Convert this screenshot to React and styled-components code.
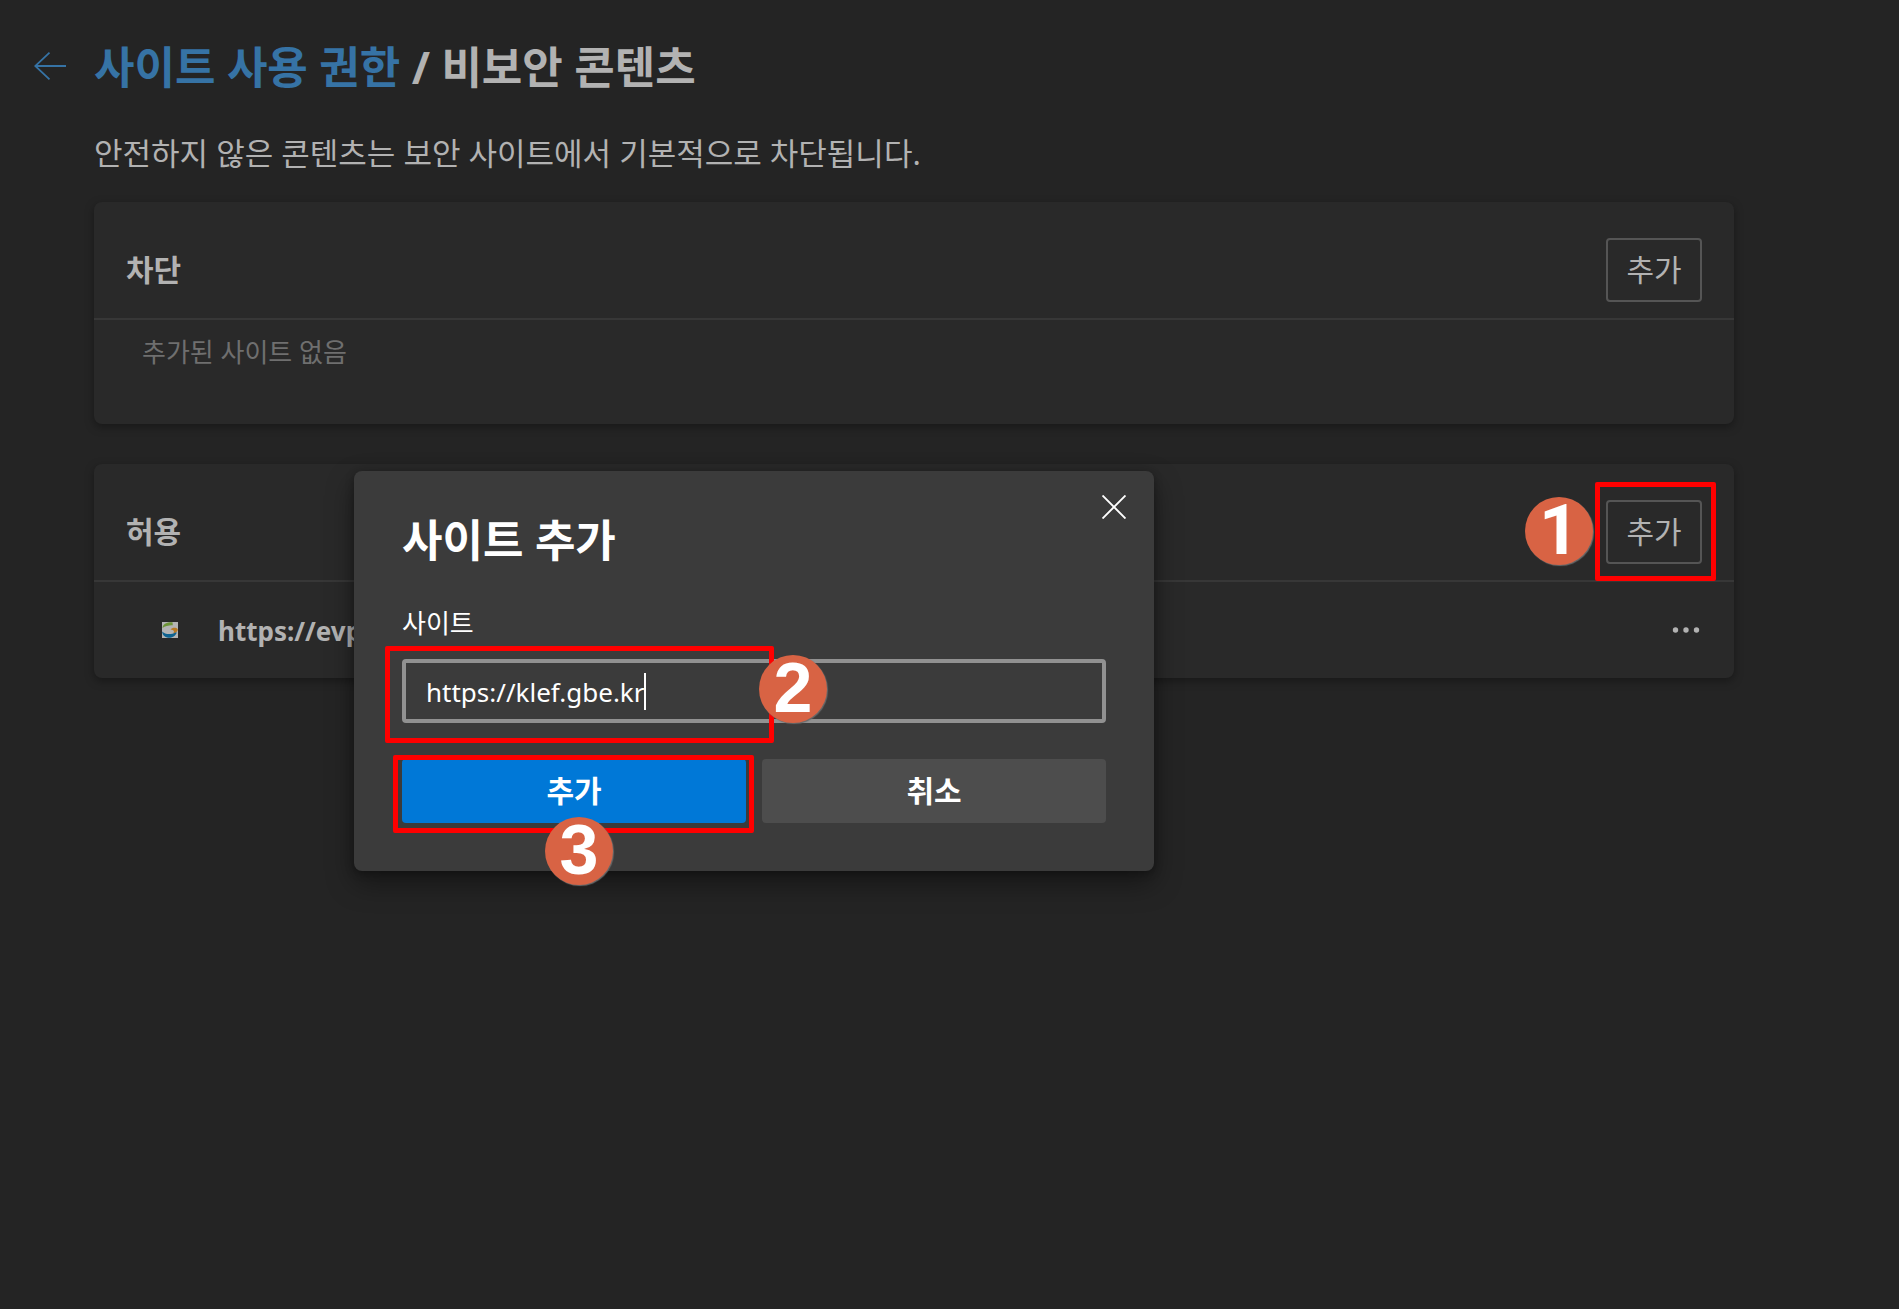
import React, { useState } from 'react';
import styled, { createGlobalStyle, css } from 'styled-components';

const GlobalStyle = createGlobalStyle`
  :root {
    --page-bg: #242424;
    --card-bg: #292929;
    --dialog-bg: #3b3b3b;
    --line: #373737;
    --text: #b2b2b2;
    --muted: #6f6f6f;
    --link: #3673a5;
    --accent: #0078d7;
    --mark: #ff0000;
    --badge: #d86344;
  }
  * {
    box-sizing: border-box;
    margin: 0;
    padding: 0;
  }
  body {
    background-color: var(--page-bg);
    color: var(--text);
    font-family: 'Noto Sans', 'Noto Sans CJK KR', sans-serif;
  }
  button,
  input {
    font-family: inherit;
    color: inherit;
  }
`;

const PageStyle = styled.div`
  position: relative;
  min-height: 100vh;
  padding: 34px 165px 36px 34px;
  .intro {
    margin: 32px 0 25px 60px;
    font-size: 31px;
    line-height: 48px;
  }
`;

const Header = styled.header`
  display: flex;
  align-items: center;
  gap: 28px;
`;

const BackLink = styled.a`
  display: flex;
  width: 32px;
  color: var(--link);
`;

const Title = styled.h1`
  padding-top: 3px;
  font-size: 44px;
  line-height: 60px;
  font-weight: 700;
  a {
    color: var(--link);
    text-decoration: none;
  }
`;

const CardList = styled.main`
  display: flex;
  flex-direction: column;
  gap: 40px;
  margin-left: 60px;
`;

const Card = styled.section`
  background-color: var(--card-bg);
  border-radius: 8px;
  box-shadow: 0 3px 10px rgba(0, 0, 0, 0.35);
`;

const CardHeader = styled.div`
  display: flex;
  align-items: center;
  justify-content: space-between;
  padding: 36px 32px 16px;
  border-bottom: 2px solid var(--line);
  h2 {
    font-size: 30px;
    line-height: 40px;
    font-weight: 700;
  }
`;

const EmptyText = styled.p`
  padding: 14px 48px 54px;
  font-size: 26px;
  line-height: 36px;
  color: var(--muted);
`;

const SiteRow = styled.div`
  display: flex;
  align-items: center;
  gap: 40px;
  height: 96px;
  padding: 0 32px 0 68px;
  font-size: 26px;
  font-weight: 700;
  .name {
    flex: 1;
    padding-top: 2px;
  }
`;

const IconButton = styled.button`
  display: flex;
  border: none;
  background: none;
  cursor: pointer;
`;

const OutlineButton = styled.button`
  width: 96px;
  height: 64px;
  border: 2px solid #555555;
  border-radius: 4px;
  background: none;
  font-size: 30px;
  line-height: 40px;
`;

const Anchor = styled.div`
  position: relative;
  display: flex;
`;

const Highlight = styled.span`
  position: absolute;
  inset: ${(props) => props.$inset};
  border: 5px solid var(--mark);
  border-radius: 2px;
  pointer-events: none;
`;

const Badge = styled.span`
  position: absolute;
  display: flex;
  align-items: center;
  justify-content: center;
  width: 68px;
  height: 68px;
  padding-bottom: 2px;
  border-radius: 50%;
  background-color: var(--badge);
  box-shadow: 1px 1px 1px #6a6a6a;
  color: #ffffff;
  font-family: 'Liberation Sans', sans-serif;
  font-size: 70px;
  line-height: 68px;
  font-weight: 700;
  pointer-events: none;
  ${(props) =>
    props.$side === 'left' &&
    css`
      right: 109px;
      top: -3px;
      font-family: Roboto, sans-serif;
    `}
  ${(props) =>
    props.$side === 'middle' &&
    css`
      left: 357px;
      top: -4px;
    `}
  ${(props) =>
    props.$side === 'bottom' &&
    css`
      left: 143px;
      top: 58px;
    `}
`;

const DialogStyle = styled.form`
  position: absolute;
  left: 354px;
  top: 471px;
  width: 800px;
  padding: 39px 48px 48px;
  border-radius: 8px;
  background-color: var(--dialog-bg);
  box-shadow: 0 12px 28px rgba(0, 0, 0, 0.4), 0 2px 8px rgba(0, 0, 0, 0.3);
  color: #ffffff;
  h2 {
    font-size: 44px;
    line-height: 60px;
    font-weight: 700;
  }
  .close {
    position: absolute;
    right: 28px;
    top: 24px;
  }
  .label {
    display: block;
    margin: 35px 0 18px;
    font-size: 26px;
    line-height: 36px;
  }
`;

const Field = styled.div`
  display: flex;
  align-items: center;
  flex: 1;
  height: 64px;
  padding: 0 20px;
  border: 4px solid #919191;
  border-radius: 4px;
  input {
    field-sizing: content;
    padding-top: 2px;
    border: none;
    outline: none;
    background: none;
    caret-color: transparent;
    font-size: 26px;
    line-height: 38px;
  }
`;

const Caret = styled.span`
  width: 2px;
  height: 37px;
  background-color: #ffffff;
`;

const Actions = styled.div`
  display: grid;
  grid-template-columns: 1fr 1fr;
  gap: 16px;
  margin-top: 36px;
`;

const ActionButton = styled.button`
  flex: 1;
  height: 64px;
  border: none;
  border-radius: 4px;
  background-color: ${(props) => (props.$primary ? 'var(--accent)' : '#4d4d4d')};
  font-size: 30px;
  line-height: 40px;
  font-weight: 700;
`;

function BackIcon() {
  return (
    <svg width="32" height="28" viewBox="0 0 32 28" fill="none" stroke="currentColor" strokeWidth="1.8">
      <path d="M32 14H1M15.500 0.700L1.200 14L15.500 27.300" />
    </svg>
  );
}

function CloseIcon() {
  return (
    <svg width="24" height="24" viewBox="0 0 24 24" stroke="#ffffff" strokeWidth="1.9">
      <path d="M0.500 0.500L23.500 23.500M23.500 0.500L0.500 23.500" />
    </svg>
  );
}

function MoreIcon() {
  return (
    <svg width="32" height="8" viewBox="0 0 32 8" fill="currentColor">
      <circle cx="5.500" cy="4" r="2.700" />
      <circle cx="16" cy="4" r="2.700" />
      <circle cx="26.500" cy="4" r="2.700" />
    </svg>
  );
}

function SiteIcon() {
  return (
    <svg width="16" height="16" viewBox="0 0 16 16">
      <rect width="16" height="16" fill="#b4b4b4" />
      <path d="M0.500 6C1 1.500 5.500 0 10.500 0.200L10.800 3.200C7 3 3 4 0.500 6Z" fill="#6c9437" />
      <path d="M8.500 7.500C10 5.500 14 5 15.800 7.200C15.800 9.500 14 11 11 11.500C13 9.500 12 8 8.500 7.500Z" fill="#b97a24" />
      <path d="M0 9.500C3 12.500 9 13 13.500 10.500L14.800 10.500C13.500 14.500 9.500 16 6 15.700C2.500 15.300 0.500 13 0 9.500Z" fill="#0d6290" />
    </svg>
  );
}

function AddSiteDialog() {
  const [site, setSite] = useState('https://klef.gbe.kr');

  return (
    <DialogStyle role="dialog" aria-labelledby="dialog-title" onSubmit={(e) => e.preventDefault()}>
      <h2 id="dialog-title">사이트 추가</h2>
      <IconButton type="button" className="close" aria-label="닫기">
        <CloseIcon />
      </IconButton>
      <label className="label" htmlFor="site">
        사이트
      </label>
      <Anchor>
        <Field>
          <input
            id="site"
            type="text"
            spellCheck={false}
            value={site}
            onChange={(e) => setSite(e.target.value)}
          />
          <Caret />
        </Field>
        <Highlight $inset="-13px 332px -20px -17px" />
        <Badge $side="middle">2</Badge>
      </Anchor>
      <Actions>
        <Anchor>
          <ActionButton type="submit" $primary>
            추가
          </ActionButton>
          <Highlight $inset="-4px -8px -10px -9px" />
          <Badge $side="bottom">3</Badge>
        </Anchor>
        <ActionButton type="button">취소</ActionButton>
      </Actions>
    </DialogStyle>
  );
}

export default function App() {
  return (
    <>
      <GlobalStyle />
      <PageStyle>
        <Header>
          <BackLink href="#permissions" aria-label="뒤로">
            <BackIcon />
          </BackLink>
          <Title>
            <a href="#permissions">사이트 사용 권한</a> / 비보안 콘텐츠
          </Title>
        </Header>
        <p className="intro">안전하지 않은 콘텐츠는 보안 사이트에서 기본적으로 차단됩니다.</p>
        <CardList>
          <Card>
            <CardHeader>
              <h2>차단</h2>
              <OutlineButton type="button">추가</OutlineButton>
            </CardHeader>
            <EmptyText>추가된 사이트 없음</EmptyText>
          </Card>
          <Card>
            <CardHeader>
              <h2>허용</h2>
              <Anchor>
                <OutlineButton type="button">추가</OutlineButton>
                <Highlight $inset="-18px -14px -17px -11px" />
                <Badge $side="left">1</Badge>
              </Anchor>
            </CardHeader>
            <SiteRow>
              <SiteIcon />
              <span className="name">https://evp</span>
              <IconButton type="button" aria-label="추가 작업">
                <MoreIcon />
              </IconButton>
            </SiteRow>
          </Card>
        </CardList>
        <AddSiteDialog />
      </PageStyle>
    </>
  );
}
